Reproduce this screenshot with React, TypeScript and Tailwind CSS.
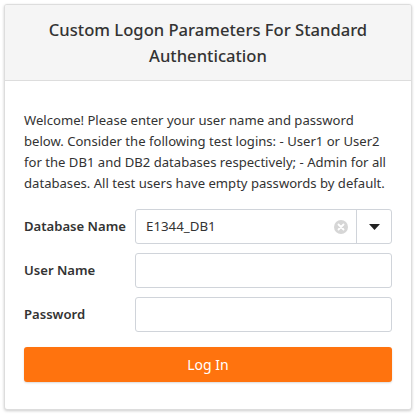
import React from "react"

const FIELDS = ["User Name", "Password"]

export default function App() {
    return (
        <div className="w-[416px] h-[416px] bg-white p-1 text-[#333] font-['Segoe_UI','Noto_Sans',sans-serif]">
            <div className="h-[406px] border border-[#ddd] rounded-[3px] shadow-[0_1px_3px_rgba(0,0,0,0.2)] bg-white overflow-hidden">
                {/* Header */}
                <div className="h-[76px] bg-[#f5f5f5] border-b border-[#ddd] flex items-center justify-center px-6">
                    <h1 className="text-[16.6px] leading-[26px] text-center font-medium text-[#333]">
                        Custom Logon Parameters For Standard Authentication
                    </h1>
                </div>

                {/* Body */}
                <div className="px-[19px] pt-[29px]">
                    <p className="text-[13.1px] leading-[21px] text-[#333]">
                        Welcome! Please enter your user name and password<br />
                        below. Consider the following test logins: - User1 or User2<br />
                        for the DB1 and DB2 databases respectively; - Admin for all<br />
                        databases. All test users have empty passwords by default.
                    </p>

                    <div className="mt-[15px] flex flex-col gap-[9px]">
                        <div className="flex items-center">
                            <label className="w-[111px] text-[13.1px] font-semibold">Database Name</label>
                            <div className="flex-1 h-[35px] flex border border-[#d0d4da] rounded-[3px]">
                                <div className="flex-1 flex items-center pl-[10px] pr-[8px] text-[13.3px]">
                                    <span className="flex-1">E1344_DB1</span>
                                    <span className="w-[14px] h-[14px] rounded-full bg-[#d6d6d6] flex items-center justify-center">
                                        <svg width="8" height="8" viewBox="0 0 8 8">
                                            <path d="M1.5 1.5L6.5 6.5M6.5 1.5L1.5 6.5" stroke="white" strokeWidth="1.8" strokeLinecap="round" />
                                        </svg>
                                    </span>
                                </div>
                                <div className="w-[35px] border-l border-[#d0d4da] flex items-center justify-center">
                                    <svg width="11" height="6" viewBox="0 0 11 6">
                                        <path d="M0 0H11L5.5 6Z" fill="#222" />
                                    </svg>
                                </div>
                            </div>
                        </div>
                        {FIELDS.map((f) => (
                            <div key={f} className="flex items-center">
                                <label className="w-[111px] text-[13.1px] font-semibold">{f}</label>
                                <input
                                    type={f === "Password" ? "password" : "text"}
                                    className="flex-1 h-[35px] border border-[#d0d4da] rounded-[3px] px-[10px] outline-none"
                                />
                            </div>
                        ))}
                    </div>

                    <button className="mt-[15px] w-full h-[35px] bg-[#ff730e] rounded-[3px] text-white text-[14px] shadow-[0_1px_2px_rgba(0,0,0,0.15)]">
                        Log In
                    </button>
                </div>
            </div>
        </div>
    )
}
